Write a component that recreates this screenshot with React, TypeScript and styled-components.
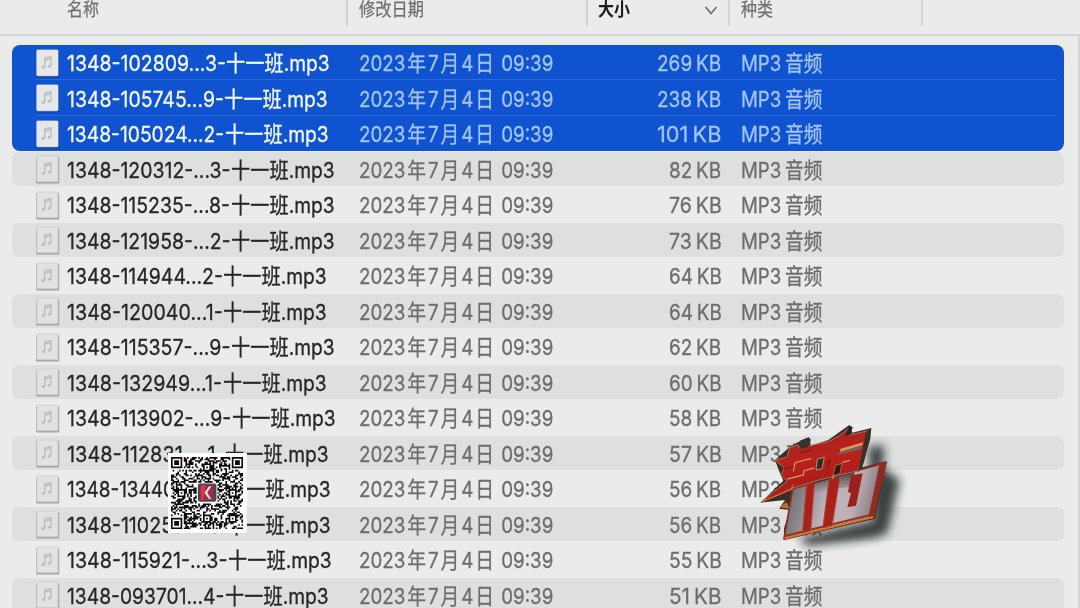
import React, { useLayoutEffect, useRef, useState } from 'react';
import styled, { createGlobalStyle } from 'styled-components';

const GlobalStyle = createGlobalStyle`
  * { box-sizing: border-box; }
  html, body { margin: 0; height: 100%; overflow: hidden; }
  body {
    background: #ebebeb;
    font-family: Inter, "Noto Sans CJK SC", sans-serif;
    -webkit-font-smoothing: antialiased;
  }
`;

const Window = styled.div`
  position: relative;
  width: 1080px;
  height: 608px;
  overflow: hidden;
  display: flex;
  flex-direction: column;
  background: #ebebeb;
`;

const Header = styled.div`
  display: grid;
  grid-template-columns: 348px 240px 142px 193px 1fr;
  height: 36px;
  flex: none;
  border-bottom: 2px solid #d6d6d6;
`;

const HeaderCell = styled.div<{ $pad: number; $bold?: boolean }>`
  display: flex;
  justify-content: space-between;
  height: 26px;
  padding-left: ${p => p.$pad}px;
  border-right: 2px solid #d2d2d2;
  font-size: 18.5px;
  line-height: 19px;
  font-weight: ${p => (p.$bold ? 700 : 400)};
  color: ${p => (p.$bold ? '#1d1d1d' : '#6f6f6f')};
  -webkit-text-stroke: ${p => (p.$bold ? '0' : '0.25px')};
`;

const Chevron = styled.svg`
  width: 14px;
  height: 10px;
  margin: 5px 10px 0 0;
`;

const List = styled.div`
  flex: 1;
  min-height: 0;
  padding: 8.5px 14px 0 12px;
  border-right: 2px solid #d6d6d6;
`;

type Tone = 'selected' | 'striped' | 'plain';

const RowSlot = styled.div<{ $tone: Tone }>`
  height: 35.54px;
  padding: ${p => (p.$tone === 'striped' ? '1px 0' : '0')};
`;

const Row = styled.div<{ $tone: Tone; $first: boolean; $last: boolean }>`
  display: grid;
  grid-template-columns: 31px 292px 239px 123px 1fr;
  align-items: center;
  height: 100%;
  padding: 1.5px 0 0 24px;
  font-size: 22px;
  line-height: 30px;
  -webkit-text-stroke: 0.3px;
  color: ${p => (p.$tone === 'selected' ? '#a3c4f8' : '#6c6d6d')};
  background: ${p => ({ selected: '#0f53d0', striped: '#dee0df', plain: 'transparent' })[p.$tone]};
  border-radius: ${p =>
    p.$tone === 'striped' ? '7px' : p.$first ? '8px 8px 0 0' : p.$last ? '0 0 8px 8px' : '0'};
`;

const Divider = styled.div`
  height: 1px;
  margin: -1px 7px 0 24px;
  background: #2b69d9;
`;

const Name = styled.div<{ $selected: boolean }>`
  display: flex;
  color: ${p => (p.$selected ? '#f4f8ff' : '#262626')};
`;

const SizeCell = styled.div`
  display: flex;
  justify-content: flex-end;
`;

const KindCell = styled.div`
  padding-left: 20px;
`;

const FitBox = styled.span`
  display: block;
  white-space: nowrap;
`;

const FitInner = styled.span`
  display: inline-block;
  transform-origin: 0 50%;
`;

const Han = styled.span`
  margin: 0 2.2px;
`;

const FileBadge = styled.svg`
  display: block;
  width: 24px;
  height: 29px;
`;

/* Condenses a run of text horizontally to a known advance width. */
function Fit({ width, children }: { width: number; children: React.ReactNode }) {
  const ref = useRef<HTMLSpanElement>(null);
  const [scale, setScale] = useState(0.87);
  useLayoutEffect(() => {
    const measure = () => {
      if (ref.current && ref.current.offsetWidth) setScale(width / ref.current.offsetWidth);
    };
    measure();
    document.fonts?.ready.then(measure);
  }, [width]);
  return (
    <FitBox style={{ width }}>
      <FitInner ref={ref} style={{ transform: `scaleX(${scale})` }}>{children}</FitInner>
    </FitBox>
  );
}

function MusicFile({ selected }: { selected: boolean }) {
  return (
    <FileBadge viewBox="0 0 24 29">
      <rect x="0.2" y="2" width="23" height="26.4" rx="1.2" fill={selected ? '#173b96' : '#a0a1a1'} />
      <rect x="0.8" y="1" width="21.2" height="25.8" rx="0.8" fill={selected ? '#e6e7ea' : '#e1e2e2'} stroke={selected ? '#f0f2f6' : '#c9caca'} strokeWidth="0.7" />
      <g fill="none" stroke="#bdbec0" strokeWidth="1.4">
        <path d="M8.7 18.2V9l6.2-1.3v9.2M8.7 11l6.2-1.3" />
        <ellipse cx="7.2" cy="18.6" rx="1.7" ry="1.5" fill="#bdbec0" stroke="none" />
        <ellipse cx="13.4" cy="17.3" rx="1.7" ry="1.5" fill="#bdbec0" stroke="none" />
      </g>
    </FileBadge>
  );
}

type FileItem = { head: string; end: number; size: string };

const NAME_LEFT = 66.5;
const TAIL_WIDTH = 104;

const files: FileItem[] = [
  { head: '1348-102809...3-', end: 329, size: '269' },
  { head: '1348-105745...9-', end: 327, size: '238' },
  { head: '1348-105024...2-', end: 328, size: '101' },
  { head: '1348-120312-...3-', end: 334, size: '82' },
  { head: '1348-115235-...8-', end: 334, size: '76' },
  { head: '1348-121958-...2-', end: 334, size: '73' },
  { head: '1348-114944...2-', end: 326, size: '64' },
  { head: '1348-120040...1-', end: 326, size: '64' },
  { head: '1348-115357-...9-', end: 334, size: '62' },
  { head: '1348-132949...1-', end: 326, size: '60' },
  { head: '1348-113902-...9-', end: 335, size: '58' },
  { head: '1348-112831-...1-', end: 328, size: '57' },
  { head: '1348-134402-...1-', end: 330, size: '56' },
  { head: '1348-110253-...1-', end: 330, size: '56' },
  { head: '1348-115921-...3-', end: 331, size: '55' },
  { head: '1348-093701...4-', end: 328, size: '51' },
];

function FileRow({ file, index }: { file: FileItem; index: number }) {
  const selected = index < 3;
  const tone: Tone = selected ? 'selected' : index % 2 === 1 ? 'striped' : 'plain';
  return (
    <RowSlot $tone={tone}>
      <Row $tone={tone} $first={index === 0} $last={index === 2}>
        <MusicFile selected={selected} />
        <Name $selected={selected}>
          <Fit width={file.end - TAIL_WIDTH - NAME_LEFT}>{file.head}</Fit>
          <Fit width={TAIL_WIDTH}>十一班.mp3</Fit>
        </Name>
        <Fit width={194}>
          2023<Han>年</Han>7<Han>月</Han>4<Han>日</Han> 09:39
        </Fit>
        <SizeCell>
          <Fit width={file.size.length === 3 ? 64 : 52.5}>{file.size}<Han />KB</Fit>
        </SizeCell>
        <KindCell>
          <Fit width={81.5}>MP3<Han />音频</Fit>
        </KindCell>
      </Row>
      {index < 2 && <Divider />}
    </RowSlot>
  );
}

const QrFrame = styled.div`
  position: absolute;
  left: 168px;
  top: 453px;
  width: 79px;
  height: 80px;
  padding: 4px 3px;
  background: #fdfdfd;
`;

const QR = 45;

function qrPath(): string {
  let seed = 110;
  let d = '';
  const rings = (dx: number, dy: number, outer: number) => {
    const r = Math.max(Math.abs(dx), Math.abs(dy));
    return outer === 3 ? r !== 2 : r !== 1;
  };
  const finders = [[3, 3], [41, 3], [3, 41]];
  const aligns = [[22, 6], [6, 22], [38, 22], [22, 38], [38, 38]];
  for (let y = 0; y < QR; y++) {
    for (let x = 0; x < QR; x++) {
      seed = (seed * 1103515245 + 12345) % 2147483648;
      let on = ((seed >> 16) & 1) === 1;
      for (const [fx, fy] of finders) {
        const r = Math.max(Math.abs(x - fx), Math.abs(y - fy));
        if (r <= 3) on = rings(x - fx, y - fy, 3);
        else if (r === 4) on = false;
      }
      for (const [ax, ay] of aligns) {
        if (Math.max(Math.abs(x - ax), Math.abs(y - ay)) <= 2) on = rings(x - ax, y - ay, 2);
      }
      if (Math.abs(x - 22) < 7 && Math.abs(y - 22) < 7) on = false;
      if (on) d += `M${x} ${y}h1.04v1.04h-1.04z`;
    }
  }
  return d;
}

const qrModules = qrPath();

function QrCode() {
  return (
    <QrFrame>
      <svg width="72" height="72" viewBox="0 0 45 45">
        <path d={qrModules} fill="#0c0c0c" />
        <rect x="16.8" y="16.5" width="11.6" height="11.4" rx="1.3" fill="#48494d" />
        <rect x="18.6" y="17.7" width="7.8" height="9.2" fill="#a32c42" />
        <path d="M18.6 17.7h3l-1.2 9.2h-1.8z" fill="#e0324d" />
        <path d="M25.2 18.4 22.6 22.2 25.2 26.4 23.4 26 21 22.4 23.6 18.4z" fill="#ffe9ec" />
      </svg>
    </QrFrame>
  );
}

const EmblemBox = styled.svg`
  position: absolute;
  left: 740px;
  top: 410px;
  width: 180px;
  height: 150px;
`;

function Emblem() {
  return (
    <EmblemBox viewBox="0 0 540 450">
      <defs>
        <linearGradient id="steel" x1="0" y1="0" x2="1" y2="0.2">
          <stop offset="0" stopColor="#58595c" />
          <stop offset="0.24" stopColor="#858186" />
          <stop offset="0.5" stopColor="#c0b4bc" />
          <stop offset="0.75" stopColor="#bfb0b7" />
          <stop offset="1" stopColor="#7b7276" />
        </linearGradient>
        <linearGradient id="red" x1="0" y1="0" x2="0.3" y2="1">
          <stop offset="0" stopColor="#9c2420" />
          <stop offset="0.5" stopColor="#b9211c" />
          <stop offset="1" stopColor="#a51a16" />
        </linearGradient>
        <linearGradient id="shade" x1="0" y1="0" x2="0" y2="1">
          <stop offset="0" stopColor="#2a2526" stopOpacity="0.85" />
          <stop offset="1" stopColor="#2a2526" stopOpacity="0" />
        </linearGradient>
        <filter id="soft" x="-30%" y="-30%" width="160%" height="160%">
          <feGaussianBlur stdDeviation="14" />
        </filter>
      </defs>
      {/* cast shadow */}
      <path d="M385 110 432 105 430 175 480 210 442 370 400 385 200 408 180 385 400 330z" fill="#181b1c" opacity="0.82" filter="url(#soft)" />
      {/* extruded sides */}
      <path d="M105 150 150 110 175 96 206 82 213 107 265 90 328 45 337 68 394 54 391 86 367 172 440 154 405 326 133 390 132 355 150 300 118 296 135 270 62 278 130 212 116 180z" fill="#3b2e25" />
      {/* steel plate */}
      <path d="M158 237 438 157 400 321 132 386z" fill="url(#steel)" stroke="#8d2c20" strokeWidth="5" />
      <path d="M218 218 345 182 332 230 211 250z" fill="url(#shade)" />
      <path d="M198 227 223 220 212 366 186 371z" fill="#a9211b" />
      <path d="M266 211 300 202 276 348 247 356z" fill="#a9211b" />
      <path d="M333 196 368 190 348 287 322 292 333 249 324 247z" fill="#9a211c" />
      <path d="M418 163 437 158 403 321 385 322z" fill="#8e2c24" />
      <path d="M134 385 400 321" stroke="#df7332" strokeWidth="6" />
      <path d="M134 378 388 316" stroke="#8f3520" strokeWidth="6" />
      <path d="M200 228 188 368M224 221 213 362M267 212 249 351M299 204 278 347" stroke="#b5543a" strokeWidth="2" />
      {/* red plate */}
      <path d="M105 150 141 141 149 113 174 104 179 115 240 100 265 95 300 76 326 54 327 75 386 62 355 182 237 210 158 234 62 277 142 213 122 196 133 174z" fill="url(#red)" stroke="#a48574" strokeWidth="2.5" />
      <path d="M180 92 206 82 213 89 205 112 182 117z" fill="#39332e" />
      <path d="M328 46 338 52 332 73 316 77z" fill="#29221d" />
      <path d="M232 147 253 142 246 176 228 180z" fill="#312b24" stroke="#c6a68a" strokeWidth="2.5" />
      <path d="M286 167 306 160 299 192 279 197z" fill="#291c18" stroke="#c9704a" strokeWidth="2.5" />
      <path d="M302 116 370 97 367 106 299 126z" fill="#d99a5a" />
      <path d="M299 126 367 107 364 117 290 136z" fill="#74645c" />
      <path d="M166 158 214 145M165 158 160 184M142 207 190 195 192 182 222 174M283 197 276 205M307 157 330 151" fill="none" stroke="#d69160" strokeWidth="4" />
      <path d="M258 157 270 153 262 175M132 177 160 171M180 129 215 119" fill="none" stroke="#7a1d17" strokeWidth="4" />
      <path d="M67 275 156 237 158 224" fill="none" stroke="#d9662e" strokeWidth="4" />
      <path d="M393 55 370 158 353 190 378 66z" fill="#3c3026" />
      <path d="M118 292 139 276 150 296z" fill="#b5713a" />
    </EmblemBox>
  );
}

export default function App() {
  return (
    <Window>
      <GlobalStyle />
      <Header>
        <HeaderCell $pad={67}><Fit width={32}>名称</Fit></HeaderCell>
        <HeaderCell $pad={11}><Fit width={65}>修改日期</Fit></HeaderCell>
        <HeaderCell $pad={10} $bold>
          <Fit width={32}>大小</Fit>
          <Chevron viewBox="0 0 14 10"><path d="M1.5 2 7 8.5 12.5 2" fill="none" stroke="#6d6d6d" strokeWidth="1.7" /></Chevron>
        </HeaderCell>
        <HeaderCell $pad={11}><Fit width={32}>种类</Fit></HeaderCell>
      </Header>
      <List>
        {files.map((file, i) => <FileRow key={i} file={file} index={i} />)}
      </List>
      <QrCode />
      <Emblem />
    </Window>
  );
}
